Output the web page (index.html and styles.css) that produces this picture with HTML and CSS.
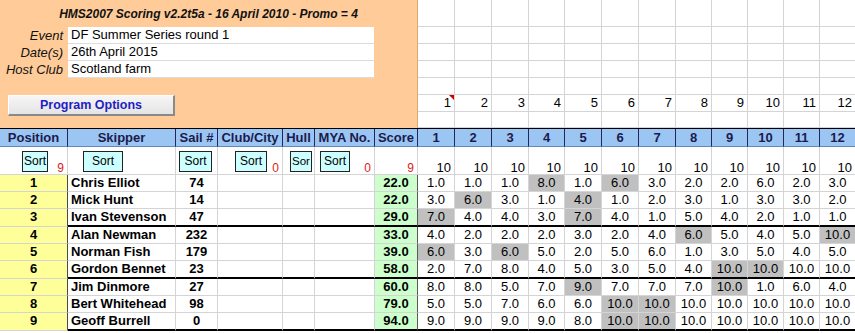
FILE: index.html
```html
<!DOCTYPE html>
<html>
<head>
<meta charset="utf-8">
<link rel="stylesheet" href="styles.css">
</head>
<body>
<div class="sheet">
  <div class="top">
    <div class="panel">
      <div class="title">HMS2007 Scoring v2.2t5a - 16 April 2010 - Promo = 4</div>
      <div class="info">
        <div class="lbl">Event</div><div class="val">DF Summer Series round 1</div>
        <div class="lbl">Date(s)</div><div class="val">26th April 2015</div>
        <div class="lbl">Host Club</div><div class="val">Scotland farm</div>
      </div>
      <div class="pbtn">Program Options</div>
    </div>
    <div class="topgrid">
      <div class="tc"></div><div class="tc"></div><div class="tc"></div><div class="tc"></div><div class="tc"></div><div class="tc"></div><div class="tc"></div><div class="tc"></div><div class="tc"></div><div class="tc"></div><div class="tc"></div><div class="tc"></div>
      <div class="tc"></div><div class="tc"></div><div class="tc"></div><div class="tc"></div><div class="tc"></div><div class="tc"></div><div class="tc"></div><div class="tc"></div><div class="tc"></div><div class="tc"></div><div class="tc"></div><div class="tc"></div>
      <div class="tc"></div><div class="tc"></div><div class="tc"></div><div class="tc"></div><div class="tc"></div><div class="tc"></div><div class="tc"></div><div class="tc"></div><div class="tc"></div><div class="tc"></div><div class="tc"></div><div class="tc"></div>
      <div class="tc"></div><div class="tc"></div><div class="tc"></div><div class="tc"></div><div class="tc"></div><div class="tc"></div><div class="tc"></div><div class="tc"></div><div class="tc"></div><div class="tc"></div><div class="tc"></div><div class="tc"></div>
      <div class="tc"></div><div class="tc"></div><div class="tc"></div><div class="tc"></div><div class="tc"></div><div class="tc"></div><div class="tc"></div><div class="tc"></div><div class="tc"></div><div class="tc"></div><div class="tc"></div><div class="tc"></div>
      <div class="tc">1<span class="note"></span></div><div class="tc">2</div><div class="tc">3</div><div class="tc">4</div><div class="tc">5</div><div class="tc">6</div><div class="tc">7</div><div class="tc">8</div><div class="tc">9</div><div class="tc">10</div><div class="tc">11</div><div class="tc">12</div>
      <div class="tc"></div><div class="tc"></div><div class="tc"></div><div class="tc"></div><div class="tc"></div><div class="tc"></div><div class="tc"></div><div class="tc"></div><div class="tc"></div><div class="tc"></div><div class="tc"></div><div class="tc"></div>
    </div>
  </div>

  <div class="tbl">
    <div class="h">Position</div><div class="h">Skipper</div><div class="h">Sail #</div><div class="h">Club/City</div><div class="h">Hull</div><div class="h">MYA No.</div><div class="h">Score</div>
    <div class="h">1</div><div class="h">2</div><div class="h">3</div><div class="h">4</div><div class="h">5</div><div class="h">6</div><div class="h">7</div><div class="h">8</div><div class="h">9</div><div class="h">10</div><div class="h">11</div><div class="h">12</div>

    <div class="s s-pos"><span class="sb sb-pos">Sort</span><span class="cnt">9</span></div>
    <div class="s"><span class="sb sb-skp">Sort</span></div>
    <div class="s"><span class="sb sb-sail">Sort</span></div>
    <div class="s"><span class="sb sb-club">Sort</span><span class="cnt">0</span></div>
    <div class="s"><span class="sb sb-hull">Sor</span></div>
    <div class="s"><span class="sb sb-mya">Sort</span><span class="cnt">0</span></div>
    <div class="s"><span class="cnt">9</span></div>
    <div class="s rs">10</div><div class="s rs">10</div><div class="s rs">10</div><div class="s rs">10</div><div class="s rs">10</div><div class="s rs">10</div><div class="s rs">10</div><div class="s rs">10</div><div class="s rs">10</div><div class="s rs">10</div><div class="s rs">10</div><div class="s rs">10</div>

    <div class="d pos">1</div><div class="d skp">Chris Elliot</div><div class="d sail">74</div><div class="d"></div><div class="d"></div><div class="d"></div><div class="d scr">22.0</div>
    <div class="d r">1.0</div><div class="d r">1.0</div><div class="d r">1.0</div><div class="d r g">8.0</div><div class="d r">1.0</div><div class="d r g">6.0</div><div class="d r">3.0</div><div class="d r">2.0</div><div class="d r">2.0</div><div class="d r">6.0</div><div class="d r">2.0</div><div class="d r">3.0</div>

    <div class="d pos">2</div><div class="d skp">Mick Hunt</div><div class="d sail">14</div><div class="d"></div><div class="d"></div><div class="d"></div><div class="d scr">22.0</div>
    <div class="d r">3.0</div><div class="d r g">6.0</div><div class="d r">3.0</div><div class="d r">1.0</div><div class="d r g">4.0</div><div class="d r">1.0</div><div class="d r">2.0</div><div class="d r">3.0</div><div class="d r">1.0</div><div class="d r">3.0</div><div class="d r">3.0</div><div class="d r">2.0</div>

    <div class="d pos">3</div><div class="d skp end">Ivan Stevenson</div><div class="d sail end">47</div><div class="d end"></div><div class="d end"></div><div class="d end"></div><div class="d scr end">29.0</div>
    <div class="d r g end">7.0</div><div class="d r end">4.0</div><div class="d r end">4.0</div><div class="d r end">3.0</div><div class="d r g end">7.0</div><div class="d r end">4.0</div><div class="d r end">1.0</div><div class="d r end">5.0</div><div class="d r end">4.0</div><div class="d r end">2.0</div><div class="d r end">1.0</div><div class="d r end">1.0</div>

    <div class="d pos">4</div><div class="d skp">Alan Newman</div><div class="d sail">232</div><div class="d"></div><div class="d"></div><div class="d"></div><div class="d scr">33.0</div>
    <div class="d r">4.0</div><div class="d r">2.0</div><div class="d r">2.0</div><div class="d r">2.0</div><div class="d r">3.0</div><div class="d r">2.0</div><div class="d r">4.0</div><div class="d r g">6.0</div><div class="d r">5.0</div><div class="d r">4.0</div><div class="d r">5.0</div><div class="d r g">10.0</div>

    <div class="d pos">5</div><div class="d skp">Norman Fish</div><div class="d sail">179</div><div class="d"></div><div class="d"></div><div class="d"></div><div class="d scr">39.0</div>
    <div class="d r g">6.0</div><div class="d r">3.0</div><div class="d r g">6.0</div><div class="d r">5.0</div><div class="d r">2.0</div><div class="d r">5.0</div><div class="d r">6.0</div><div class="d r">1.0</div><div class="d r">3.0</div><div class="d r">5.0</div><div class="d r">4.0</div><div class="d r">5.0</div>

    <div class="d pos">6</div><div class="d skp end">Gordon Bennet</div><div class="d sail end">23</div><div class="d end"></div><div class="d end"></div><div class="d end"></div><div class="d scr end">58.0</div>
    <div class="d r end">2.0</div><div class="d r end">7.0</div><div class="d r end">8.0</div><div class="d r end">4.0</div><div class="d r end">5.0</div><div class="d r end">3.0</div><div class="d r end">5.0</div><div class="d r end">4.0</div><div class="d r g end">10.0</div><div class="d r g end">10.0</div><div class="d r end">10.0</div><div class="d r end">10.0</div>

    <div class="d pos">7</div><div class="d skp">Jim Dinmore</div><div class="d sail">27</div><div class="d"></div><div class="d"></div><div class="d"></div><div class="d scr">60.0</div>
    <div class="d r">8.0</div><div class="d r">8.0</div><div class="d r">5.0</div><div class="d r">7.0</div><div class="d r g">9.0</div><div class="d r">7.0</div><div class="d r">7.0</div><div class="d r">7.0</div><div class="d r g">10.0</div><div class="d r">1.0</div><div class="d r">6.0</div><div class="d r">4.0</div>

    <div class="d pos">8</div><div class="d skp">Bert Whitehead</div><div class="d sail">98</div><div class="d"></div><div class="d"></div><div class="d"></div><div class="d scr">79.0</div>
    <div class="d r">5.0</div><div class="d r">5.0</div><div class="d r">7.0</div><div class="d r">6.0</div><div class="d r">6.0</div><div class="d r g">10.0</div><div class="d r g">10.0</div><div class="d r">10.0</div><div class="d r">10.0</div><div class="d r">10.0</div><div class="d r">10.0</div><div class="d r">10.0</div>

    <div class="d pos">9</div><div class="d skp end">Geoff Burrell</div><div class="d sail end">0</div><div class="d end"></div><div class="d end"></div><div class="d end"></div><div class="d scr end">94.0</div>
    <div class="d r end">9.0</div><div class="d r end">9.0</div><div class="d r end">9.0</div><div class="d r end">9.0</div><div class="d r end">8.0</div><div class="d r g end">10.0</div><div class="d r g end">10.0</div><div class="d r end">10.0</div><div class="d r end">10.0</div><div class="d r end">10.0</div><div class="d r end">10.0</div><div class="d r end">10.0</div>
  </div>
</div>
</body>
</html>
```
FILE: styles.css
```css
html, body {
  margin: 0;
  padding: 0;
}
body {
  width: 855px;
  height: 333px;
  overflow: hidden;
  background: #fff;
  font-family: "Liberation Sans", Arial, sans-serif;
  font-size: 13px;
  color: #000;
}
.sheet {
  width: 856px;
}

/* ---------- top area ---------- */
.top {
  display: flex;
  height: 128px;
  border-bottom: 1px solid #000;
}
.panel {
  flex: none;
  width: 418px;
  box-sizing: border-box;
  background: #ffcc99;
  border-right: 1px solid #d9a877;
}
.title {
  height: 27px;
  display: flex;
  align-items: center;
  justify-content: center;
  font-size: 12px;
  font-weight: bold;
  font-style: italic;
  color: #111;
}
.info {
  display: grid;
  grid-template-columns: 68px 306px;
  grid-auto-rows: 17px;
}
.lbl {
  text-align: right;
  padding-right: 5px;
  font-style: italic;
  line-height: 17px;
  color: #111;
}
.val {
  background: #fff;
  border-bottom: 1px solid #dcdcdc;
  padding-left: 3px;
  line-height: 16px;
}
.pbtn {
  margin: 17px 0 0 8px;
  width: 167px;
  height: 21px;
  box-sizing: border-box;
  background: linear-gradient(#f6f6f6, #e4e4e4);
  border-top: 1px solid #fff;
  border-left: 1px solid #fff;
  border-right: 2px solid #8a8a8a;
  border-bottom: 2px solid #8a8a8a;
  color: #1f1fc4;
  font-weight: bold;
  font-size: 12.5px;
  line-height: 18px;
  text-align: center;
}
.topgrid {
  display: grid;
  grid-template-columns: 37px 37px 37px 36px 37px 37px 37px 36px 36px 36px 36px 36px;
  grid-template-rows: 27px 17px 17px 17px 17px 17px 16px;
}
.tc {
  position: relative;
  box-sizing: border-box;
  border-right: 1px solid #d4d4d4;
  border-bottom: 1px solid #d4d4d4;
  text-align: right;
  padding-right: 3px;
  line-height: 16px;
}
.note {
  position: absolute;
  top: 0;
  right: 0;
  width: 0;
  height: 0;
  border-top: 5px solid #d00000;
  border-left: 5px solid transparent;
}

/* ---------- table ---------- */
.tbl {
  display: grid;
  grid-template-columns: 68px 108px 42px 65px 32px 60px 43px 37px 37px 37px 36px 37px 37px 37px 36px 36px 36px 36px 36px;
  grid-template-rows: 18px 28px 17px 17px 18px 17px 17px 18px 17px 17px 18px;
}
.h {
  box-sizing: border-box;
  background: #9bc5f2;
  border-right: 1px solid #26265e;
  border-bottom: 1px solid #6286bd;
  color: #1b1b4d;
  font-weight: bold;
  text-align: center;
  line-height: 17px;
  white-space: nowrap;
  overflow: hidden;
}
.s {
  box-sizing: border-box;
  display: flex;
  align-items: flex-end;
  border-right: 1px solid #d4d4d4;
  border-bottom: 1px solid #d4d4d4;
}
.sb {
  align-self: flex-start;
  margin-top: 4px;
  height: 21px;
  box-sizing: border-box;
  background: #ccffff;
  border: 1px solid #222;
  font-size: 12px;
  line-height: 19px;
  text-align: center;
  white-space: nowrap;
}
.sb-pos { margin-left: 22px; width: 26px; }
.sb-skp { margin-left: 15px; width: 40px; }
.sb-sail { margin-left: 3px; width: 33px; }
.sb-club { margin-left: 17px; width: 32px; }
.sb-hull { margin-left: 7px; width: 22px; font-size: 11.5px; }
.sb-mya { margin-left: 5px; width: 30px; }
.cnt {
  margin-left: auto;
  padding-right: 3px;
  color: #e02020;
  font-size: 12px;
  line-height: 12px;
}
.rs {
  justify-content: flex-end;
  padding-right: 3px;
  line-height: 13px;
}
.d {
  box-sizing: border-box;
  border-right: 1px solid #d4d4d4;
  border-bottom: 1px solid #d4d4d4;
  line-height: 16px;
  white-space: nowrap;
  overflow: hidden;
}
.pos {
  background: #ffff99;
  border-right: 1px solid #4a4a4a;
  font-weight: bold;
  text-align: center;
}
.skp {
  font-weight: bold;
  padding-left: 3px;
}
.sail {
  font-weight: bold;
  text-align: center;
}
.scr {
  background: #ccffcc;
  border-right: 1px solid #5a5a5a;
  font-weight: bold;
  text-align: center;
}
.r {
  text-align: center;
}
.g {
  background: #c0c0c0;
}
.end {
  border-bottom: 2px solid #000;
}
```
